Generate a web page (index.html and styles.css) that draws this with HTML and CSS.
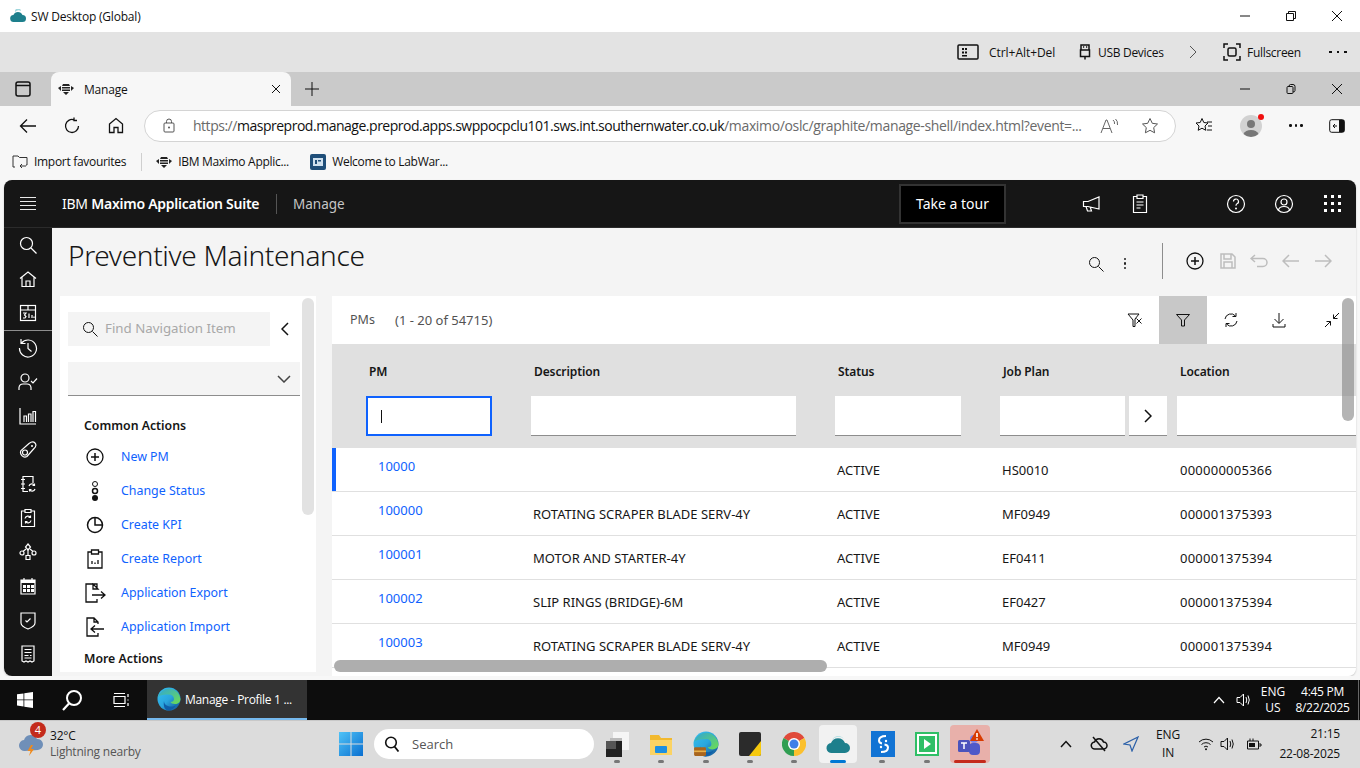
FILE: index.html
```html
<!DOCTYPE html>
<html lang="en">
<head>
  <meta charset="UTF-8" />
  <title>Preventive Maintenance</title>
  <link rel="stylesheet" href="styles.css">
</head>
<body>
  <!-- outer citrix window -->
  <div class="titlebar">
    <svg class="title-logo" width="16" height="14" viewBox="0 0 16 14"><path d="M4 13a3.500 3.500 0 0 1-.6-7A5 5 0 0 1 12.500 6a3.500 3.500 0 0 1 0 7z" fill="#1d7f8c"/><path d="M5 3a5 5 0 0 1 6-1 3 3 0 0 0-6 1z" fill="#9fd6dc"/></svg>
    <span class="title-text">SW Desktop (Global)</span>
    <div class="win-btns">
      <button class="win-btn"><svg width="12" height="12" viewBox="0 0 12 12"><path d="M1 6h10" class="ln"/></svg></button>
      <button class="win-btn"><svg width="12" height="12" viewBox="0 0 12 12"><path d="M1.500 3.500h7v7h-7zM3.500 3.500v-2h7v7h-2" class="ln"/></svg></button>
      <button class="win-btn"><svg width="12" height="12" viewBox="0 0 12 12"><path d="M1 1l10 10M11 1L1 11" class="ln"/></svg></button>
    </div>
  </div>

  <div class="citrixbar">
    <div class="cx-item cx-ctrl">
      <svg width="22" height="16" viewBox="0 0 22 16"><rect x="1" y="1" width="20" height="14" rx="1" class="ln lw15"/><path d="M5 4h2v2H5zM8 4h2v2H8zM5 7.500h2v2H5zM5 11h5v1.500H5zM8 7.500h2v2H8z" fill="#111"/></svg>
      <span>Ctrl+Alt+Del</span>
    </div>
    <div class="cx-item cx-usb">
      <svg width="12" height="16" viewBox="0 0 12 16"><path d="M2 6V1h8v5M1.500 6h9v6.500h-9zM6 12.500V15.500M4 3h1.200M7 3h1.200" class="ln lw15"/></svg>
      <span>USB Devices</span>
    </div>
    <svg class="cx-chev" width="10" height="16" viewBox="0 0 10 16"><path d="M2 2l6 6-6 6" class="ln" stroke="#555"/></svg>
    <div class="cx-item cx-full">
      <svg width="18" height="18" viewBox="0 0 18 18"><path d="M1 5V1h4M13 1h4v4M17 13v4h-4M5 17H1v-4" class="ln lw15"/><rect x="5" y="5" width="8" height="8" rx="1.500" class="ln lw15"/></svg>
      <span>Fullscreen</span>
    </div>
    <div class="cx-dots"><i></i><i></i><i></i></div>
  </div>

  <!-- edge tabs -->
  <div class="tabstrip">
    <div class="tab-side"><svg width="16" height="16" viewBox="0 0 16 16"><rect x="1" y="1" width="14" height="14" rx="2" class="ln lw15"/><path d="M1 4.500h14" class="ln lw15"/></svg></div>
    <div class="tab">
      <svg width="16" height="12" viewBox="0 0 16 12"><use href="#bee"/></svg>
      <span class="tab-label">Manage</span>
      <svg class="tab-x" width="10" height="10" viewBox="0 0 10 10"><path d="M1 1l8 8M9 1L1 9" class="ln"/></svg>
    </div>
    <svg class="tab-plus" width="14" height="14" viewBox="0 0 14 14"><path d="M7 0v14M0 7h14" class="ln"/></svg>
    <div class="win-btns">
      <button class="win-btn"><svg width="12" height="12" viewBox="0 0 12 12"><path d="M1 6h10" class="ln"/></svg></button>
      <button class="win-btn"><svg width="12" height="12" viewBox="0 0 12 12"><path d="M2 4.500q0-1 1-1h4q1 0 1 1v5q0 1-1 1H3q-1 0-1-1zM4 3.500q0-2 1.500-2H8q2 0 2 2v4q0 1.500-2 1.500" class="ln"/></svg></button>
      <button class="win-btn"><svg width="12" height="12" viewBox="0 0 12 12"><path d="M1 1l10 10M11 1L1 11" class="ln"/></svg></button>
    </div>
  </div>

  <div class="addressbar">
    <button class="nav-btn"><svg width="18" height="16" viewBox="0 0 18 16"><path d="M17 8H1.500M8 1.500L1.500 8 8 14.500" class="ln lw13"/></svg></button>
    <button class="nav-btn"><svg width="18" height="18" viewBox="0 0 18 18"><path d="M15.500 9A6.500 6.500 0 1 1 11 2.800M11 .5v3h3" class="ln lw13"/></svg></button>
    <button class="nav-btn"><svg width="16" height="17" viewBox="0 0 16 17"><path d="M1.500 7L8 1.500 14.500 7v8.500h-4.500v-5H6v5H1.500z" class="ln lw13"/></svg></button>
    <div class="urlbox">
      <svg width="12" height="15" viewBox="0 0 12 15"><rect x="1" y="5" width="10" height="9" rx="1" class="ln" stroke="#555"/><path d="M3.500 5V3.500a2.500 2.500 0 0 1 5 0V5" class="ln" stroke="#555"/><circle cx="6" cy="9.500" r="1" fill="#555"/></svg>
      <span class="url"><span class="url-dim">https://</span><span class="url-host">maspreprod.manage.preprod.apps.swppocpclu101.sws.int.southernwater.co.uk</span><span class="url-dim url-path">/maximo/oslc/graphite/manage-shell/index.html?event=...</span></span>
      <svg class="url-read" width="20" height="16" viewBox="0 0 20 16"><path d="M1 15L6 2h1l5 13M3 10.500h7M13 2q2 1.500 1.500 4M15.500 1q2.500 2 2 6" class="ln" stroke="#666"/></svg>
      <svg class="url-star" width="18" height="17" viewBox="0 0 18 17"><path d="M9 1.500l2.300 4.800 5.200.7-3.800 3.600.9 5.200L9 13.300l-4.600 2.500.9-5.200L1.500 7l5.200-.7z" class="ln" stroke="#555"/></svg>
    </div>
    <div class="addr-tools">
      <svg width="18" height="17" viewBox="0 0 18 17"><path d="M7 1.500l1.800 4 4.200.5-3 3 .8 4.300L7 11.200l-3.800 2.100.8-4.300-3-3 4.200-.5z" class="ln"/><path d="M12 5h5M13 9h4M12 13h5" class="ln"/></svg>
      <div class="avatar"><svg width="24" height="24" viewBox="0 0 24 24"><circle cx="12" cy="12" r="11" fill="#d2d2d2"/><circle cx="12" cy="10" r="4" fill="#777"/><path d="M4.500 20a8 6 0 0 1 15 0 11 11 0 0 1-15 0z" fill="#777"/></svg><i></i></div>
      <div class="more-dots"><i></i><i></i><i></i></div>
      <svg width="16" height="14" viewBox="0 0 16 14"><rect x=".7" y=".7" width="14.600" height="12.600" rx="2" class="ln"/><path d="M10 1h4.500q.8 0 .8 1v10q0 1-.8 1H10z" fill="#111"/><path d="M8 7H4M6 5L4 7l2 2" class="ln"/></svg>
    </div>
  </div>

  <div class="bookmarks">
    <div class="bm"><svg width="16" height="15" viewBox="0 0 16 15"><path d="M3 13H1V2h5l1.500 1.500H15V11h-1M8 12h6M10 10l-2 2 2 2" class="ln" stroke="#333"/></svg><span>Import favourites</span></div>
    <span class="bm-sep"></span>
    <div class="bm bm-ibm"><svg width="16" height="12" viewBox="0 0 16 12"><use href="#bee"/></svg><span>IBM Maximo Applic...</span></div>
    <div class="bm bm-lab"><svg width="16" height="16" viewBox="0 0 16 16"><rect width="16" height="16" rx="2" fill="#1f4e79"/><rect x="3" y="4" width="10" height="8" fill="#cfe0ee"/><path d="M5 6h2v4H5zM8 6h3v1.500H8z" fill="#1f4e79"/></svg><span>Welcome to LabWar...</span></div>
  </div>

  <!-- maximo app -->
  <div class="app">
    <header class="app-head">
      <button class="hamburger"><i></i><i></i><i></i><i></i></button>
      <div class="brand">IBM <b>Maximo Application Suite</b></div>
      <div class="app-name">Manage</div>
      <button class="tour">Take a tour</button>
      <div class="head-icons">
        <svg class="hi-mega" width="20" height="18" viewBox="0 0 20 18"><path d="M18 2v12L7 11.500H2.500V6.500H7zM5 11.500l1.500 4.500h4l-1.200-3.600" class="ln-w"/></svg>
        <svg class="hi-clip" width="16" height="20" viewBox="0 0 16 20"><path d="M5 2.500H1.500v16h13v-16H11M5 1h6v3.500H5zM4.500 8h7M4.500 11h7M4.500 14h4" class="ln-w"/></svg>
        <svg class="hi-help" width="20" height="20" viewBox="0 0 20 20"><circle cx="10" cy="10" r="8.500" class="ln-w"/><path d="M7.500 7.500a2.500 2.500 0 1 1 3.500 2.300c-.8.400-1 .9-1 1.900" class="ln-w"/><circle cx="10" cy="14.500" r="1" fill="#fff"/></svg>
        <svg class="hi-user" width="20" height="20" viewBox="0 0 20 20"><circle cx="10" cy="10" r="8.500" class="ln-w"/><circle cx="10" cy="8" r="3" class="ln-w"/><path d="M4.500 16c.5-2.500 2.500-3.500 5.500-3.500s5 1 5.500 3.500" class="ln-w"/></svg>
        <div class="hi-grid"><i></i><i></i><i></i><i></i><i></i><i></i><i></i><i></i><i></i></div>
      </div>
    </header>

    <div class="app-body">
      <nav class="rail">
        <div class="rail-item"><svg width="18" height="18" viewBox="0 0 18 18"><circle cx="7.500" cy="7.500" r="6" class="ln-w"/><path d="M12 12l5.500 5.500" class="ln-w"/></svg></div>
        <div class="rail-item"><svg width="18" height="18" viewBox="0 0 18 18"><path d="M1 8.500L9 2l8 6.500M3 7v9.500h12V7M7 16.500V11h4v5.500" class="ln-w"/></svg></div>
        <div class="rail-item rail-last"><svg width="18" height="18" viewBox="0 0 18 18"><rect x="1.500" y="1.500" width="15" height="15" class="ln-w"/><path d="M1.500 6h15M9 1.500V6M4 9h3l-1.500 2 1.500 1.500-1 1.500H4M10 14V9.500M13 14v-3M15 14v-1.500" class="ln-w"/></svg></div>
        <div class="rail-item"><svg width="20" height="20" viewBox="0 0 20 20"><path d="M3.500 5A8.500 8.500 0 1 1 1.500 10M3 1v4.500h4.500M10 5v5.500l3.500 3" class="ln-w"/></svg></div>
        <div class="rail-item"><svg width="20" height="18" viewBox="0 0 20 18"><circle cx="7" cy="5" r="4" class="ln-w"/><path d="M1 17v-2.500a4 4 0 0 1 4-3.500h4a4 4 0 0 1 4 3.500V17M13 8l2 2 4-4.500" class="ln-w"/></svg></div>
        <div class="rail-item"><svg width="18" height="18" viewBox="0 0 18 18"><path d="M1 1v16h16M5 15V9h2.500v6M9.500 15V7H12v8M14 15V4.500h2.500V15" class="ln-w"/></svg></div>
        <div class="rail-item"><svg width="18" height="18" viewBox="0 0 18 18"><path d="M16 2c1.500 1.500 1 4-1 5.500l-7 8a4.500 4.500 0 0 1-6-6l8-7C12 1 14.500.5 16 2z" class="ln-w"/><circle cx="6" cy="11.500" r="2.500" class="ln-w"/><circle cx="13" cy="5" r="1" fill="#fff"/></svg></div>
        <div class="rail-item"><svg width="18" height="18" viewBox="0 0 18 18"><path d="M4 4V1.500h10V8M2 4.500h4M2 9h4M2 13.500h4M4 13.500v3h5M4 4.500v9M10 11a3 3 0 0 1 5.500-.5M16 14a3 3 0 0 1-5.500.5M15.500 8.500v2h-2M10.500 16.500v-2h2" class="ln-w"/></svg></div>
        <div class="rail-item"><svg width="16" height="20" viewBox="0 0 16 20"><path d="M5 3H1.500v15.500h13V3H11M5 1.500h6V4.500H5zM5 10.500a3 3 0 0 1 5.500-1M11 12.500a3 3 0 0 1-5.500 1M10.500 7.500v2h-2M5.500 15.500v-2h2" class="ln-w"/></svg></div>
        <div class="rail-item"><svg width="18" height="18" viewBox="0 0 18 18"><path d="M9 1l2.500 3L9 7 6.500 4zM7 12.500h4v4H7z" class="ln-w"/><circle cx="3" cy="10" r="2" class="ln-w"/><circle cx="15" cy="10" r="2" class="ln-w"/><path d="M7 6l-3 2.500M11 6l3 2.500M9 7v5.500" class="ln-w"/></svg></div>
        <div class="rail-item"><svg width="18" height="18" viewBox="0 0 18 18"><path d="M2 3h14v14H2zM5 1v3M13 1v3" class="ln-w"/><path d="M2 3h14v3H2zM4 8h3v3H4zM8 8h3v3H8zM12 8h3v3h-3zM4 12h3v3H4zM8 12h3v3H8zM12 12h3v3h-3z" fill="#fff"/></svg></div>
        <div class="rail-item"><svg width="16" height="19" viewBox="0 0 16 19"><path d="M1 2h14v10c0 3-3 4.500-7 6-4-1.500-7-3-7-6zM5.500 9.500L7 11l3.500-3.500" class="ln-w"/></svg></div>
        <div class="rail-item"><svg width="14" height="18" viewBox="0 0 14 18"><path d="M1 1h12v15l-2 1-2-1-2 1-2-1-2 1-2-1zM3.500 4.500h7M3.500 7.500h7M3.500 10.500h4M9 10.500h1.500M3.500 13h7" class="ln-w"/></svg></div>
      </nav>

      <main class="content">
        <div class="page-head">
          <h1 class="page-title">Preventive Maintenance</h1>
          <div class="page-tools">
            <svg class="pt-search" width="16" height="16" viewBox="0 0 16 16"><circle cx="6.500" cy="6.500" r="5" class="ln"/><path d="M10.500 10.500l5 5" class="ln"/></svg>
            <div class="pt-kebab"><i></i><i></i><i></i></div>
            <span class="pt-sep"></span>
            <svg class="pt-btn pt-add" width="18" height="18" viewBox="0 0 18 18"><circle cx="9" cy="9" r="8" class="ln lw13"/><path d="M9 5v8M5 9h8" class="ln lw15"/></svg>
            <svg class="pt-btn" width="16" height="16" viewBox="0 0 16 16"><path d="M1 1h11l3 3v11H1zM4 1v5h7V1M4 15V9h8v6" class="ln-off"/></svg>
            <svg class="pt-btn" width="18" height="14" viewBox="0 0 18 14"><path d="M5 1L1 4.500 5 8M1 4.500h12a4 4 0 0 1 0 8H7" class="ln-off"/></svg>
            <svg class="pt-btn" width="18" height="14" viewBox="0 0 18 14"><path d="M7 1L1 7l6 6M1 7h16" class="ln-off"/></svg>
            <svg class="pt-btn" width="18" height="14" viewBox="0 0 18 14"><path d="M11 1l6 6-6 6M17 7H1" class="ln-off"/></svg>
          </div>
        </div>

        <div class="panels">
          <aside class="side">
            <div class="side-top">
              <div class="find">
                <svg width="16" height="16" viewBox="0 0 16 16"><circle cx="6.500" cy="6.500" r="5" class="ln"/><path d="M10.500 10.500l5 5" class="ln"/></svg>
                <span>Find Navigation Item</span>
              </div>
              <svg class="find-back" width="8" height="14" viewBox="0 0 8 14"><path d="M7 1L1 7l6 6" class="ln lw15"/></svg>
            </div>
            <div class="side-select"><svg width="14" height="8" viewBox="0 0 14 8"><path d="M1 1l6 6 6-6" class="ln lw15" stroke="#444"/></svg></div>
            <h3 class="side-head">Common Actions</h3>
            <ul class="actions">
              <li><span class="act-ic"><svg width="18" height="18" viewBox="0 0 18 18"><circle cx="9" cy="9" r="8" class="ln lw13"/><path d="M9 5v8M5 9h8" class="ln lw15"/></svg></span><a>New PM</a></li>
              <li><span class="act-ic"><svg width="8" height="22" viewBox="0 0 8 22"><circle cx="4" cy="4" r="2.500" class="ln"/><circle cx="4" cy="11" r="2.500" class="ln lw15"/><circle cx="4" cy="18" r="3" fill="#111"/></svg></span><a>Change Status</a></li>
              <li><span class="act-ic"><svg width="18" height="18" viewBox="0 0 18 18"><circle cx="9" cy="9" r="7.500" class="ln lw15"/><path d="M9 1.500V9h7.500" class="ln lw15"/></svg></span><a>Create KPI</a></li>
              <li><span class="act-ic"><svg width="16" height="20" viewBox="0 0 16 20"><path d="M4.500 3H1v16h14V3h-3.500M4.500 1h7v4h-7zM5 15v-3M8 15v-1.500M11 15v-4" class="ln lw13"/></svg></span><a>Create Report</a></li>
              <li><span class="act-ic"><svg width="22" height="20" viewBox="0 0 22 20"><path d="M13 6V1H2v18h11v-3M9 1l5 5H9zM8 12h13M17 8.500l4 3.500-4 3.500" class="ln lw13"/></svg></span><a>Application Export</a></li>
              <li><span class="act-ic"><svg width="20" height="20" viewBox="0 0 20 20"><path d="M13 7V5L9 1H2v18h11v-3M9 1v4h4M19 12H6M10 8.500L6 12l4 3.500" class="ln lw13"/></svg></span><a>Application Import</a></li>
            </ul>
            <h3 class="side-head side-more">More Actions</h3>
            <div class="side-bar"></div>
          </aside>

          <section class="data">
            <div class="data-top">
              <span class="data-name">PMs</span>
              <span class="data-count">(1 - 20 of 54715)</span>
              <div class="data-tools">
                <button class="dt-btn"><svg width="16" height="16" viewBox="0 0 16 16"><path d="M1 2h11L8 7v7.500H6V8L1 2zM9.500 6.500l5 5M14.500 6.500l-5 5" class="ln"/></svg></button>
                <button class="dt-btn dt-on"><svg width="16" height="16" viewBox="0 0 16 16"><path d="M1.500 2.500h13L9.500 8v6h-3V8z" class="ln"/></svg></button>
                <button class="dt-btn"><svg width="16" height="16" viewBox="0 0 16 16"><path d="M2 7a6 6 0 0 1 10.500-3M14 9a6 6 0 0 1-10.500 3M13 1v3.500H9.500M3 15v-3.500h3.500" class="ln"/></svg></button>
                <button class="dt-btn"><svg width="16" height="16" viewBox="0 0 16 16"><path d="M8 1v10M3.500 7L8 11.500 12.500 7M2 12v3h12v-3" class="ln"/></svg></button>
                <button class="dt-btn dt-last"><svg width="16" height="16" viewBox="0 0 16 16"><path d="M15 1L9.500 6.500M9.500 2.500v4h4M1 15l5.500-5.500M2.500 9.500h4v4" class="ln"/></svg></button>
              </div>
            </div>

            <div class="grid-head">
              <div class="hc hc-pm">PM</div><div class="hc">Description</div><div class="hc">Status</div><div class="hc hc-job">Job Plan</div><div class="hc">Location</div>
            </div>
            <div class="grid-filter">
              <div class="fc"><div class="fin fin-focus"><i class="caret"></i></div></div>
              <div class="fc"><div class="fin fin-desc"></div></div>
              <div class="fc"><div class="fin fin-status"></div></div>
              <div class="fc fc-job"><div class="fin fin-job"></div><div class="fin fin-more"><svg width="8" height="14" viewBox="0 0 8 14"><path d="M1 1l6 6-6 6" class="ln lw15"/></svg></div></div>
              <div class="fc"><div class="fin fin-loc"></div></div>
            </div>

            <div class="row row-first"><div class="cell cell-pm"><a>10000</a></div><div class="cell"></div><div class="cell">ACTIVE</div><div class="cell">HS0010</div><div class="cell">000000005366</div></div>
            <div class="row"><div class="cell cell-pm"><a>100000</a></div><div class="cell">ROTATING SCRAPER BLADE SERV-4Y</div><div class="cell">ACTIVE</div><div class="cell">MF0949</div><div class="cell">000001375393</div></div>
            <div class="row"><div class="cell cell-pm"><a>100001</a></div><div class="cell">MOTOR AND STARTER-4Y</div><div class="cell">ACTIVE</div><div class="cell">EF0411</div><div class="cell">000001375394</div></div>
            <div class="row"><div class="cell cell-pm"><a>100002</a></div><div class="cell">SLIP RINGS (BRIDGE)-6M</div><div class="cell">ACTIVE</div><div class="cell">EF0427</div><div class="cell">000001375394</div></div>
            <div class="row"><div class="cell cell-pm"><a>100003</a></div><div class="cell">ROTATING SCRAPER BLADE SERV-4Y</div><div class="cell">ACTIVE</div><div class="cell">MF0949</div><div class="cell">000001375394</div></div>

            <div class="bar-v"></div>
            <div class="bar-h"></div>
          </section>
        </div>
      </main>
    </div>
  </div>
  <div class="app-foot"></div>

  <!-- remote windows taskbar -->
  <div class="tb-remote">
    <div class="tr-start"><svg width="16" height="16" viewBox="0 0 16 16"><path d="M0 2.300l6.500-.9v6.100H0zM7.300 1.300L16 0v7.500H7.300zM0 8.300h6.500v6.200L0 13.600zM7.300 8.300H16V16l-8.700-1.300z" fill="#fff"/></svg></div>
    <div class="tr-search"><svg width="22" height="22" viewBox="0 0 22 22"><circle cx="13" cy="9" r="7" fill="none" stroke="#fff" stroke-width="2"/><path d="M8 14.500L2 21" stroke="#fff" stroke-width="2.200"/></svg></div>
    <div class="tr-view"><svg width="18" height="16" viewBox="0 0 18 16"><path d="M1 4.500h11v7H1zM1 1.500h11M1 14.500h11M15 2v3M15 7.500v1M15 11v3" fill="none" stroke="#fff" stroke-width="1.200"/></svg></div>
    <div class="tr-app">
      <svg width="24" height="24" viewBox="0 0 24 24"><use href="#edge"/></svg>
      <span>Manage - Profile 1 ...</span>
    </div>
    <div class="tr-tray">
      <svg width="12" height="8" viewBox="0 0 12 8"><path d="M1 7l5-5.500L11 7" fill="none" stroke="#fff" stroke-width="1.200"/></svg>
      <svg class="tr-spk" width="16" height="16" viewBox="0 0 16 16"><path d="M1 5.500h3L7.500 2v12L4 10.500H1zM10 5q1.500 3 0 6M12 3.500q2.500 4.500 0 9" fill="none" stroke="#fff" stroke-width="1"/></svg>
      <div class="tr-lang"><span>ENG</span><span>US</span></div>
      <div class="tr-clock"><span>4:45 PM</span><span>8/22/2025</span></div>
    </div>
  </div>

  <!-- local windows taskbar -->
  <div class="tb-local">
    <div class="weather">
      <div class="wx-ic">
        <svg width="26" height="26" viewBox="0 0 26 26"><path d="M7 20a5.500 5.500 0 0 1-1-11A7 7 0 0 1 19 8a5.500 5.500 0 0 1 1 11z" fill="#6f8fb8"/><path d="M7 13a6 6 0 0 1 8-5 6 6 0 0 0-8 5z" fill="#c6d6e8"/><path d="M13 14l-3.500 6h3l-1.500 5 5-7h-3l2-4z" fill="#f08a1c"/></svg>
        <span class="wx-badge">4</span>
      </div>
      <div class="wx-text"><span class="wx-temp">32°C</span><span class="wx-note">Lightning nearby</span></div>
    </div>
    <div class="start"><svg width="24" height="24" viewBox="0 0 24 24"><defs><linearGradient id="st" x1="0" y1="0" x2="1" y2="1"><stop offset="0" stop-color="#4fc3f7"/><stop offset="1" stop-color="#0a6fd0"/></linearGradient></defs><path d="M0 0h11.500v11.500H0zM12.500 0H24v11.500H12.500zM0 12.500h11.500V24H0zM12.500 12.500H24V24H12.500z" fill="url(#st)"/></svg></div>
    <div class="winsearch"><svg width="16" height="16" viewBox="0 0 16 16"><circle cx="7" cy="6.500" r="5.300" fill="none" stroke="#111" stroke-width="1.600"/><path d="M10.500 10.500l4 5" stroke="#111" stroke-width="1.800"/></svg><span>Search</span></div>
    <div class="apps">
      <div class="app-ic"><svg width="24" height="26" viewBox="0 0 24 26"><rect x="8" y="1" width="16" height="18" fill="#f5f5f5"/><rect x="5" y="7" width="12" height="12" fill="#bbb"/><rect x="1" y="10" width="16" height="16" fill="#222"/><rect x="1" y="10" width="10" height="8" fill="#555"/></svg></div>
      <div class="app-ic"><svg width="24" height="24" viewBox="0 0 24 24"><path d="M1 3h9l2 3h11v17H1z" fill="#f2b92e"/><path d="M1 8h22v15H1z" fill="#fbd363"/><rect x="6" y="14" width="12" height="7" rx="1" fill="#1d8fe1"/></svg></div>
      <div class="app-ic"><svg width="26" height="26" viewBox="0 0 24 24"><use href="#edge"/><rect x="1" y="15" width="11" height="8" rx="1" fill="#a8641d"/><rect x="1" y="18" width="11" height="1.500" fill="#e7b04a"/></svg></div>
      <div class="app-ic"><svg width="22" height="24" viewBox="0 0 22 24"><rect width="22" height="24" rx="2" fill="#2b2b2b"/><path d="M22 9v13q0 2-2 2H10z" fill="#f6c90e"/></svg></div>
      <div class="app-ic"><svg width="24" height="24" viewBox="0 0 24 24"><path d="M12 12L1.600 6A12 12 0 0 1 22.400 6z" fill="#e04a3a"/><path d="M12 12L22.400 6A12 12 0 0 1 12 24z" fill="#fbc02d"/><path d="M12 12V24A12 12 0 0 1 1.600 6z" fill="#2f9e52"/><circle cx="12" cy="12" r="6" fill="#fff"/><circle cx="12" cy="12" r="4.500" fill="#3f7fe8"/></svg></div>
      <div class="app-ic app-active"><svg width="24" height="22" viewBox="0 0 24 22"><path d="M6 20a5 5 0 0 1-1-10A7.500 7.500 0 0 1 19 10a5 5 0 0 1 0 10z" fill="#1d7f8c"/><path d="M6 7a7 7 0 0 1 12-1 8 8 0 0 0-12 1z" fill="#a9dce0"/></svg></div>
      <div class="app-ic"><svg width="24" height="26" viewBox="0 0 24 26"><rect width="24" height="26" fill="#1173d4"/><path d="M15 5Q8 5 8 9.500 8 12 11 12.500M13.500 13.500Q17 14 17 16.500 17 21 10 21" fill="none" stroke="#fff" stroke-width="2"/><circle cx="15" cy="10" r="1.200" fill="#fff"/><circle cx="10" cy="16" r="1.200" fill="#fff"/></svg></div>
      <div class="app-ic"><svg width="24" height="24" viewBox="0 0 24 24"><rect x="1" y="1" width="22" height="22" fill="#fff" stroke="#2fbf66" stroke-width="2"/><rect x="4" y="4" width="16" height="16" fill="#2fbf66"/><path d="M9 7l7 5-7 5z" fill="#fff"/></svg></div>
      <div class="app-ic app-alert"><svg width="30" height="30" viewBox="0 0 30 30"><circle cx="19" cy="10" r="4" fill="#7b83eb"/><rect x="14" y="14" width="11" height="12" rx="4" fill="#5059c9"/><rect x="3" y="11" width="12" height="12" rx="1.500" fill="#4b53bc"/><path d="M6 14h6M9 14v6" stroke="#fff" stroke-width="1.500"/><path d="M22 0l7 12H15z" fill="#d83b01"/><path d="M22 4v4M22 9.300v1.500" stroke="#fff" stroke-width="1.600"/></svg></div>
    </div>
    <div class="tray">
      <svg class="tray-chev" width="12" height="8" viewBox="0 0 12 8"><path d="M1 7l5-5.500L11 7" class="ln lw15"/></svg>
      <svg class="tray-cloud" width="18" height="16" viewBox="0 0 18 16"><path d="M5 13a3.500 3.500 0 0 1-.5-7A4.800 4.800 0 0 1 13.500 6a3.500 3.500 0 0 1 0 7zM3 1l12 14" class="ln lw15"/></svg>
      <svg class="tray-loc" width="16" height="16" viewBox="0 0 16 16"><path d="M15 1L1 8l6 1 2 6z" fill="none" stroke="#2a5fa8" stroke-width="1.200"/></svg>
      <div class="tray-lang"><span>ENG</span><span>IN</span></div>
      <svg class="tray-i" width="16" height="14" viewBox="0 0 16 14"><path d="M1 5a10 10 0 0 1 14 0M3.500 7.500a6.500 6.500 0 0 1 9 0M6 10a3 3 0 0 1 4 0" class="ln"/><circle cx="8" cy="12.300" r="1" fill="#111"/></svg>
      <svg class="tray-i" width="16" height="16" viewBox="0 0 16 16"><path d="M1 5.500h3L7.500 2v12L4 10.500H1zM10 5q1.500 3 0 6M12 3.500q2.500 4.500 0 9" class="ln"/></svg>
      <svg class="tray-bat" width="16" height="14" viewBox="0 0 16 14"><path d="M1.500 4h11v8h-11zM12.500 7H15v2h-2.500M4 4V1.500M7 4V1.500" class="ln"/><rect x="3" y="6" width="6" height="4" fill="#111"/></svg>
      <div class="tray-clock"><span>21:15</span><span>22-08-2025</span></div>
    </div>
  </div>

  <!-- shared glyphs -->
  <svg class="defs" width="0" height="0">
    <defs>
      <symbol id="bee" viewBox="0 0 16 12">
        <path d="M5 1h6l1 2H4zM4 4h8v1.500H4zM4 6.500h8V8H4zM5 9h6l-3 3zM0 5l3-2v5zM16 5l-3-2v5z" fill="#222"/>
      </symbol>
      <symbol id="edge" viewBox="0 0 24 24">
        <linearGradient id="eg1" x1="0" y1="0" x2="1" y2="1"><stop offset="0" stop-color="#35c1f1"/><stop offset=".5" stop-color="#2aa6de"/><stop offset="1" stop-color="#114a8b"/></linearGradient>
        <linearGradient id="eg2" x1="0" y1="0" x2="1" y2="1"><stop offset="0" stop-color="#2fa5d8"/><stop offset="1" stop-color="#6ede4f"/></linearGradient>
        <circle cx="12" cy="12" r="11.500" fill="url(#eg1)"/>
        <path d="M1 10A11.500 11.500 0 0 1 23.500 12c0 3-2.500 5-5.500 5-2.500 0-4-1-4.500-2 2 0 3.500-1 3.500-3a5 5 0 0 0-5-4.500C7 7.500 3 8 1 10z" fill="url(#eg2)"/>
        <path d="M7 14c0 3 2.500 5.500 7 5.500 2 0 3.500-.5 5-1.500-1.500 3-4.500 5.500-7.500 5.500C8 23.500 6 19 7 14z" fill="#0f5ea8"/>
      </symbol>
    </defs>
  </svg>
</body>
</html>
```

FILE: styles.css
```css
* {
  box-sizing: border-box;
}

html, body {
  margin: 0;
  height: 768px;
  overflow: hidden;
}

body {
  font-family: "Open Sans", "Noto Sans", sans-serif;
  font-size: 12px;
  color: #111;
  background: #f7f7f7;
}

button {
  border: 0;
  padding: 0;
  background: none;
  font: inherit;
  color: inherit;
}

svg {
  display: block;
  flex: none;
}

.defs {
  position: absolute;
}

.ln {
  fill: none;
  stroke: #111;
  stroke-width: 1;
}

.ln[stroke="#555"] { stroke: #555; }
.ln[stroke="#666"] { stroke: #666; }
.ln[stroke="#444"] { stroke: #444; }
.ln[stroke="#333"] { stroke: #333; }

.lw13 {
  stroke-width: 1.3;
}

.lw15 {
  stroke-width: 1.5;
}

.ln-w {
  fill: none;
  stroke: #fff;
  stroke-width: 1.2;
}

.ln-off {
  fill: none;
  stroke: #bdbdbd;
  stroke-width: 1.5;
}

/* outer window */
.titlebar {
  height: 32px;
  background: #fff;
  display: flex;
  align-items: center;
  padding-left: 10px;
}

.title-text {
  margin-left: 5px;
  letter-spacing: -0.2px;
}

.win-btns {
  margin-left: auto;
  display: flex;
}

.win-btn {
  width: 46px;
  height: 32px;
  display: flex;
  align-items: center;
  justify-content: center;
}

.citrixbar {
  height: 40px;
  background: #e3e3e3;
  display: flex;
  align-items: center;
  padding-left: 957px;
}

.cx-item {
  display: flex;
  align-items: center;
  letter-spacing: -0.3px;
}

.cx-ctrl {
  width: 122px;
  gap: 10px;
  letter-spacing: -0.05px;
}

.cx-usb {
  width: 109px;
  gap: 7px;
}

.cx-chev {
  margin-right: 24px;
}

.cx-full {
  width: 106px;
  gap: 6px;
  margin-left: 1px;
}

.cx-dots {
  display: flex;
  gap: 5px;
}

.cx-dots i {
  width: 2.500px;
  height: 2.500px;
  background: #111;
}

/* edge */
.tabstrip {
  height: 34px;
  background: #cacaca;
  display: flex;
  align-items: center;
}

.tab-side {
  width: 51px;
  display: flex;
  justify-content: center;
  padding-right: 5px;
}

.tab {
  width: 240px;
  height: 34px;
  background: #f7f7f7;
  border-radius: 8px 8px 0 0;
  display: flex;
  align-items: center;
  padding: 0 10px 0 7px;
}

.tab-label {
  margin-left: 10px;
  letter-spacing: -0.2px;
}

.tab-x {
  margin-left: auto;
}

.tab-plus {
  margin-left: 14px;
}

.tabstrip .win-btn {
  height: 34px;
}

.addressbar {
  height: 41px;
  background: #f7f7f7;
  display: flex;
  align-items: center;
  padding-left: 6px;
  padding-bottom: 2px;
}

.nav-btn {
  width: 44px;
  height: 32px;
  display: flex;
  align-items: center;
  justify-content: center;
}

.urlbox {
  width: 1032px;
  height: 32px;
  margin-left: 6px;
  background: #fff;
  border: 1px solid #d4d4d4;
  border-radius: 16px;
  display: flex;
  align-items: center;
  padding-left: 18px;
}

.url {
  margin-left: 18px;
  font-size: 14px;
  letter-spacing: -0.48px;
  white-space: nowrap;
  width: 892px;
}

.url-dim {
  color: #6a6a6a;
}

.url-path {
  letter-spacing: -0.35px;
}

.url-host {
  color: #111;
}

.url-read {
  margin-left: 15px;
}

.url-star {
  margin-left: 21px;
}

.addr-tools {
  display: flex;
  align-items: center;
  padding-left: 19px;
}

.avatar {
  margin-left: 26px;
  position: relative;
}

.avatar i {
  position: absolute;
  top: 0;
  right: -1px;
  width: 6px;
  height: 6px;
  border-radius: 50%;
  background: #f01010;
}

.more-dots {
  margin-left: 26px;
  display: flex;
  gap: 3px;
}

.more-dots i {
  width: 2.500px;
  height: 2.500px;
  border-radius: 50%;
  background: #111;
}

.addr-tools > svg:last-child {
  margin-left: 26px;
}

.bookmarks {
  height: 33px;
  background: #f7f7f7;
  display: flex;
  align-items: center;
  padding: 0 0 4px 12px;
}

.bm {
  display: flex;
  align-items: center;
  gap: 6px;
  letter-spacing: -0.3px;
}

.bm-sep {
  width: 1px;
  height: 18px;
  background: #cfcfcf;
  margin: 0 14px 0 15px;
}

.bm-ibm {
  width: 154px;
}

/* maximo app */
.app {
  height: 496px;
  margin: 0 4px;
  border-radius: 8px;
  overflow: hidden;
  background: #f4f4f4;
  box-shadow: 0 1px 2px rgba(0, 0, 0, 0.2);
  font-family: "Noto Sans", "Open Sans", sans-serif;
}

.app-foot {
  height: 4px;
  background: #f7f7f7;
}

.app-head {
  height: 48px;
  background: #161616;
  color: #fff;
  display: flex;
  align-items: center;
  border-bottom: 1px solid #2b2b2b;
}

.hamburger {
  width: 48px;
  display: flex;
  flex-direction: column;
  align-items: center;
  gap: 2.500px;
}

.hamburger i {
  width: 16px;
  height: 1.500px;
  background: #e8e8e8;
}

.brand {
  width: 225px;
  padding-left: 10px;
  font-size: 14px;
  border-right: 1px solid #555;
  line-height: 20px;
  letter-spacing: -0.25px;
}

.brand b {
  font-weight: 600;
}

.app-name {
  width: 622px;
  padding-left: 16px;
  font-size: 13.500px;
  color: #c6c6c6;
}

.tour {
  width: 107px;
  height: 40px;
  background: #000;
  border: 2px solid #333;
  color: #fff;
  font-size: 14px;
}

.head-icons {
  display: flex;
  align-items: center;
  margin-left: 76px;
}

.hi-mega {
  margin-left: -1px;
}

.hi-clip {
  margin-left: 31px;
}

.hi-help {
  margin-left: 78px;
}

.hi-user {
  margin-left: 28px;
}

.hi-grid {
  margin-left: 30px;
  display: grid;
  grid-template-columns: repeat(3, 3px);
  gap: 4px;
}

.hi-grid i {
  width: 3px;
  height: 3px;
  background: #fff;
}

.app-body {
  height: 448px;
  display: flex;
}

.rail {
  width: 48px;
  background: #161616;
  flex: none;
}

.rail-item {
  height: 34px;
  display: flex;
  align-items: center;
  justify-content: center;
}

.rail-last {
  height: 35px;
  border-bottom: 1px solid #8d8d8d;
}

.content {
  flex: 1;
  min-width: 0;
}

.page-head {
  height: 68px;
  display: flex;
  padding-left: 16px;
}

.page-title {
  margin: 9px 0 0;
  font-size: 28px;
  line-height: 36px;
  font-weight: 300;
  color: #161616;
  letter-spacing: -0.33px;
}

.page-tools {
  margin-left: auto;
  display: flex;
  align-items: center;
  height: 68px;
  padding: 0 24px 2px 0;
}

.pt-search {
  margin-top: 5px;
}

.pt-kebab {
  margin: 5px 0 0 20px;
  display: flex;
  flex-direction: column;
  gap: 2px;
}

.pt-kebab i {
  width: 2.500px;
  height: 2.500px;
  background: #222;
  border-radius: 50%;
}

.pt-sep {
  width: 1px;
  height: 36px;
  background: #8d8d8d;
  margin: 0 23px 0 36px;
}

.pt-btn {
  margin-left: 14px;
}

.pt-add {
  margin: 0 2px 0 0;
}

.panels {
  height: 380px;
  display: flex;
  margin-left: 8px;
  gap: 16px;
}

.side {
  width: 256px;
  height: 376px;
  background: #fff;
  padding: 16px 0 0 8px;
  position: relative;
  overflow: hidden;
}

.side-top {
  display: flex;
  align-items: center;
}

.find {
  width: 202px;
  height: 34px;
  background: #f4f4f4;
  display: flex;
  align-items: center;
  gap: 7px;
  padding-left: 14px;
  font-size: 13.300px;
  color: #a8a8a8;
}

.find span {
  margin-bottom: 2px;
}

.find-back {
  margin-left: 11px;
}

.side-select {
  width: 232px;
  height: 34px;
  margin-top: 16px;
  background: #f4f4f4;
  border-bottom: 1px solid #8d8d8d;
  display: flex;
  align-items: center;
  justify-content: flex-end;
  padding-right: 9px;
}

.side-head {
  margin: 22px 0 0 16px;
  font-size: 12.300px;
  line-height: 16px;
  font-weight: 600;
  color: #161616;
}

.actions {
  list-style: none;
  margin: 6px 0 0;
  padding: 0;
}

.actions li {
  height: 34px;
  display: flex;
  align-items: center;
}

.act-ic {
  width: 22px;
  margin: 0 15px 0 16px;
  display: flex;
  justify-content: center;
  flex: none;
}

.actions a,
.cell-pm a {
  color: #0f62fe;
}

.actions a {
  font-size: 12.400px;
  margin-bottom: 2px;
}

.side-more {
  margin-top: 7px;
}

.side-bar {
  position: absolute;
  top: 2px;
  left: 242px;
  width: 12px;
  height: 217px;
  border-radius: 6px;
  background: #e2e2e2;
}

.data {
  width: 1024px;
  height: 380px;
  background: #fff;
  position: relative;
  overflow: hidden;
  border-radius: 0 0 6px 0;
}

.data-top {
  height: 48px;
  display: flex;
  align-items: center;
  padding-left: 18px;
  color: #525252;
}

.data-name {
  font-size: 12.500px;
  width: 45px;
  margin-bottom: 2px;
}

.data-count {
  font-size: 13px;
}

.data-tools {
  margin-left: auto;
  display: flex;
}

.dt-btn {
  width: 48px;
  height: 48px;
  display: flex;
  align-items: center;
  justify-content: center;
}

.dt-on {
  background: #c8c8c8;
}

.dt-last {
  margin-left: 5px;
}

.grid-head,
.grid-filter,
.row {
  display: grid;
  grid-template-columns: 199px 304px 165px 177px 179px;
}

.grid-head {
  height: 52px;
  background: #e0e0e0;
  align-items: center;
}

.hc {
  padding: 3px 0 0 3px;
  font-weight: 600;
  color: #161616;
  letter-spacing: -0.1px;
}

.hc-pm {
  padding-left: 37px;
}

.grid-filter {
  height: 52px;
  background: #e0e0e0;
}

.fc {
  display: flex;
}

.fin {
  height: 40px;
  background: #fff;
  border-bottom: 1px solid #8d8d8d;
}

.fin-focus {
  width: 126px;
  margin-left: 34px;
  border: 2px solid #0f62fe;
  display: flex;
  align-items: center;
  padding-left: 13px;
}

.caret {
  width: 1px;
  height: 13px;
  background: #111;
}

.fin-desc {
  width: 265px;
}

.fin-status {
  width: 126px;
}

.fin-job {
  width: 125px;
}

.fin-more {
  width: 38px;
  margin-left: 4px;
  display: flex;
  align-items: center;
  justify-content: center;
}

.fin-loc {
  width: 179px;
}

.row {
  height: 44px;
  border-bottom: 1px solid #e0e0e0;
  align-items: center;
}

.row-first {
  box-shadow: inset 4px 0 0 #0f62fe;
}

.cell {
  padding: 1px 0 0 2px;
  font-size: 13px;
  color: #161616;
  white-space: nowrap;
}

.cell:nth-child(5) {
  padding-left: 3px;
  letter-spacing: 0.25px;
}

.cell-pm {
  padding: 0 0 7px 46px;
}

.bar-v {
  position: absolute;
  top: 2px;
  right: 2px;
  width: 12px;
  height: 123px;
  border-radius: 6px;
  background: rgba(130, 130, 130, 0.6);
}

.bar-h {
  position: absolute;
  left: 2px;
  top: 364px;
  width: 493px;
  height: 12px;
  border-radius: 6px;
  background: #aeaeae;
}

/* remote taskbar */
.tb-remote {
  height: 40px;
  background: #0d0d0d;
  color: #fff;
  display: flex;
  align-items: center;
}

.tr-start {
  width: 50px;
  display: flex;
  justify-content: center;
}

.tr-search {
  width: 44px;
  display: flex;
  justify-content: center;
}

.tr-view {
  width: 53px;
  display: flex;
  justify-content: center;
  padding-left: 2px;
}

.tr-app {
  width: 160px;
  height: 40px;
  background: #333;
  border-bottom: 2px solid #76b9ed;
  display: flex;
  align-items: center;
  gap: 4px;
  padding-left: 10px;
  letter-spacing: -0.3px;
}

.tr-tray {
  margin-left: auto;
  display: flex;
  align-items: center;
  height: 40px;
  padding-right: 8px;
  border-right: 1px solid #666;
  margin-right: 1px;
}

.tr-spk {
  margin-left: 11px;
}

.tr-lang {
  width: 38px;
  margin-left: 2px;
  display: flex;
  flex-direction: column;
  align-items: center;
  line-height: 16px;
}

.tr-clock {
  width: 55px;
  margin-left: 3px;
  display: flex;
  flex-direction: column;
  align-items: center;
  line-height: 16px;
  letter-spacing: -0.3px;
}

/* local taskbar */
.tb-local {
  height: 48px;
  background: #dcdcdc;
  display: flex;
  align-items: center;
  box-shadow: inset 0 1px 0 #c8c8c8;
}

.weather {
  width: 336px;
  display: flex;
  align-items: center;
  padding-left: 18px;
}

.wx-ic {
  width: 32px;
  position: relative;
}

.wx-badge {
  position: absolute;
  top: -9px;
  left: 12px;
  width: 16px;
  height: 16px;
  border-radius: 50%;
  background: #c42b1c;
  color: #fff;
  font-size: 11px;
  line-height: 16px;
  text-align: center;
}

.wx-text {
  display: flex;
  flex-direction: column;
  line-height: 16px;
  letter-spacing: -0.2px;
}

.wx-note {
  color: #555;
}

.start {
  width: 30px;
  display: flex;
  justify-content: center;
}

.winsearch {
  width: 220px;
  height: 30px;
  margin-left: 8px;
  background: #fff;
  border-radius: 15px;
  display: flex;
  align-items: center;
  gap: 12px;
  padding-left: 10px;
  color: #555;
  font-size: 13px;
}

.apps {
  display: flex;
  margin-left: 1px;
}

.app-ic {
  width: 44.300px;
  height: 38px;
  display: flex;
  align-items: center;
  justify-content: center;
  position: relative;
  border-radius: 4px;
}

.app-ic::after {
  content: "";
  position: absolute;
  bottom: 0;
  left: 19px;
  width: 6px;
  height: 3px;
  border-radius: 2px;
  background: #777;
}

.app-active {
  background: #f2f2f2;
  width: 38px;
  margin: 0 3px;
}

.app-active::after {
  left: 11px;
  width: 16px;
  background: #0078d4;
}

.app-alert {
  width: 40px;
  margin-left: 1px;
  background: #e8b0aa;
}

.app-alert::after {
  left: 4px;
  width: 32px;
  background: #c42b1c;
}

.tray {
  margin-left: auto;
  display: flex;
  align-items: center;
  padding-right: 20px;
}

.tray-cloud {
  margin-left: 18px;
}

.tray-loc {
  margin-left: 15px;
}

.tray-lang {
  width: 40px;
  margin-left: 9px;
  display: flex;
  flex-direction: column;
  align-items: center;
  line-height: 18px;
  letter-spacing: -0.2px;
}

.tray-lang + .tray-i {
  margin-left: 10px;
}

.tray-i {
  margin-right: 6px;
}

.tray-bat {
  margin-left: 4px;
}

.tray-clock {
  width: 78px;
  display: flex;
  flex-direction: column;
  align-items: flex-end;
  line-height: 20px;
  letter-spacing: -0.2px;
}
```
